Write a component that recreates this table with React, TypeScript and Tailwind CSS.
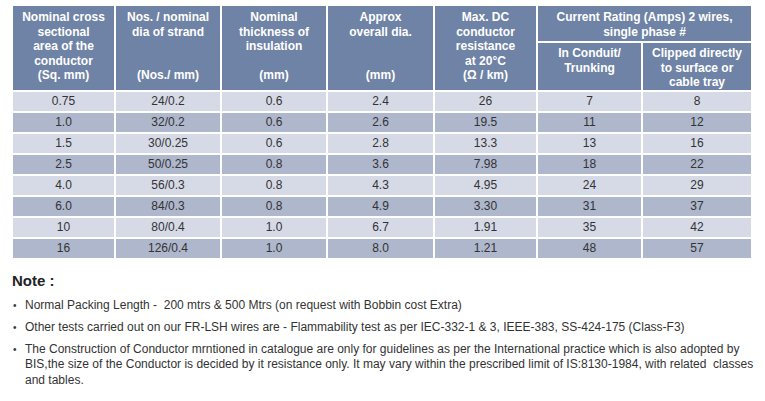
const rows = [
  ["0.75", "24/0.2", "0.6", "2.4", "26", "7", "8"],
  ["1.0", "32/0.2", "0.6", "2.6", "19.5", "11", "12"],
  ["1.5", "30/0.25", "0.6", "2.8", "13.3", "13", "16"],
  ["2.5", "50/0.25", "0.8", "3.6", "7.98", "18", "22"],
  ["4.0", "56/0.3", "0.8", "4.3", "4.95", "24", "29"],
  ["6.0", "84/0.3", "0.8", "4.9", "3.30", "31", "37"],
  ["10", "80/0.4", "1.0", "6.7", "1.91", "35", "42"],
  ["16", "126/0.4", "1.0", "8.0", "1.21", "48", "57"],
];

const mainHeads: string[][] = [
  ["Nominal cross", "sectional", "area of the", "conductor", "(Sq. mm)"],
  ["Nos. / nominal", "dia of strand", "", "", "(Nos./ mm)"],
  ["Nominal", "thickness of", "insulation", "", "(mm)"],
  ["Approx", "overall dia.", "", "", "(mm)"],
  ["Max. DC", "conductor", "resistance", "at 20°C", "(Ω / km)"],
];

const widths = ["w-[103px]", "w-[106px]", "w-[106px]", "w-[107px]", "w-[103px]", "w-[105px]", "w-[110px]"];

const notes = [
  "Normal Packing Length -  200 mtrs & 500 Mtrs (on request with Bobbin cost Extra)",
  "Other tests carried out on our FR-LSH wires are - Flammability test as per IEC-332-1 & 3, IEEE-383, SS-424-175 (Class-F3)",
  "The Construction of Conductor mrntioned in catalogue are only for guidelines as per the International practice which is also adopted by BIS,the size of the Conductor is decided by it resistance only. It may vary within the prescribed limit of IS:8130-1984, with related  classes and tables.",
];

function Lines({ lines }: { lines: string[] }) {
  return (
    <>
      {lines.map((l, i) => (
        <div key={i} className="h-[14.6px]">
          {l}
        </div>
      ))}
    </>
  );
}

export default function App() {
  return (
    <div className="w-[765px] h-[401px] bg-white font-['Liberation_Sans',Arial,sans-serif] pt-[4px] pl-[12px]">
      <table className="border-collapse table-fixed w-[742px] -ml-[1px]">
        <colgroup>
          {widths.map((w, i) => (
            <col key={i} className={w} />
          ))}
        </colgroup>
        <thead>
          <tr className="h-[37px]">
            {mainHeads.map((h, i) => (
              <th
                key={i}
                rowSpan={2}
                className="border-2 border-white bg-[#6f83a6] text-white text-[12px] font-bold leading-[14.6px] align-top pt-[4px] pb-0 px-1"
              >
                <Lines lines={h} />
              </th>
            ))}
            <th
              colSpan={2}
              className="border-2 border-white bg-[#6f83a6] text-white text-[12px] font-bold leading-[14.6px] align-top pt-[4px] pb-0"
            >
              <Lines lines={["Current Rating (Amps) 2 wires,", "single phase #"]} />
            </th>
          </tr>
          <tr className="h-[48px]">
            <th className="border-2 border-white bg-[#6f83a6] text-white text-[12px] font-bold leading-[15px] align-top pt-[3px] pb-0">
              <div>In Conduit/</div>
              <div>Trunking</div>
            </th>
            <th className="border-2 border-white bg-[#6f83a6] text-white text-[12px] font-bold leading-[14.5px] align-top pt-[3px] pb-0">
              <div>Clipped directly</div>
              <div>to surface or</div>
              <div>cable tray</div>
            </th>
          </tr>
        </thead>
        <tbody>
          {rows.map((r, i) => (
            <tr key={i} className={"h-[21px] " + (i % 2 === 0 ? "bg-[#d6dae6]" : "bg-[#aeb7cc]")}>
              {r.map((c, j) => (
                <td
                  key={j}
                  className="border-2 border-white p-0 text-center text-[12px] leading-[17px] text-[#333333]"
                >
                  {c}
                </td>
              ))}
            </tr>
          ))}
        </tbody>
      </table>

      <div className="mt-[12px] text-[15px] font-bold text-[#222222] leading-[18px]">Note :</div>
      <ul className="mt-[8px] text-[12px] text-[#333333] leading-[15.5px]">
        {notes.map((n, i) => (
          <li key={i} className="flex mb-[6.5px]">
            <span className="w-[13px] shrink-0 pl-[1px] text-[10px]">•</span>
            <span className="whitespace-pre-wrap">{n}</span>
          </li>
        ))}
      </ul>
    </div>
  );
}
